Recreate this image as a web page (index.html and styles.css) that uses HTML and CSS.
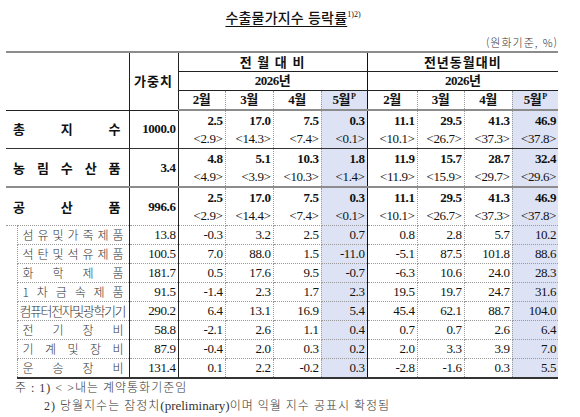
FILE: index.html
```html
<!DOCTYPE html>
<html lang="ko">
<head>
    <meta charset="UTF-8">
    <meta name="viewport" content="width=device-width, initial-scale=1.0">
    <title>수출물가지수 등락률</title>
    <link rel="stylesheet" href="styles.css">
</head>
<body>
    <div class="page">
        <h1 class="title"><span class="title-text">수출물가지수 등락률</span><sup>1)2)</sup></h1>
        <div class="unit">(원화기준, %)</div>

        <table class="price-table">
            <colgroup>
                <col class="c-pad">
                <col class="c-label">
                <col class="c-weight">
                <col class="c-m47"><col class="c-m48"><col class="c-m48"><col class="c-m46">
                <col class="c-m50"><col class="c-m47"><col class="c-m48"><col class="c-m46">
            </colgroup>
            <thead>
                <tr class="head-group">
                    <th colspan="2" rowspan="3" class="blank"></th>
                    <th rowspan="3" class="weight-head">가중치</th>
                    <th colspan="4" class="split">전 월 대 비</th>
                    <th colspan="4">전년동월대비</th>
                </tr>
                <tr class="head-year">
                    <th colspan="4" class="split">2026년</th>
                    <th colspan="4">2026년</th>
                </tr>
                <tr class="head-month">
                    <th>2월</th><th>3월</th><th>4월</th><th class="prelim split">5월<sup>P</sup></th>
                    <th>2월</th><th>3월</th><th>4월</th><th class="prelim">5월<sup>P</sup></th>
                </tr>
            </thead>
            <tbody>
                <tr class="main row-total">
                    <td colspan="2" class="label">총 지 수</td>
                    <td class="weight">1000.0</td>
                    <td><b>2.5</b><span>&lt;2.9&gt;</span></td>
                    <td><b>17.0</b><span>&lt;14.3&gt;</span></td>
                    <td><b>7.5</b><span>&lt;7.4&gt;</span></td>
                    <td class="prelim split"><b>0.3</b><span>&lt;0.1&gt;</span></td>
                    <td><b>11.1</b><span>&lt;10.1&gt;</span></td>
                    <td><b>29.5</b><span>&lt;26.7&gt;</span></td>
                    <td><b>41.3</b><span>&lt;37.3&gt;</span></td>
                    <td class="prelim"><b>46.9</b><span>&lt;37.8&gt;</span></td>
                </tr>
                <tr class="main row-agri">
                    <td colspan="2" class="label">농 림 수 산 품</td>
                    <td class="weight">3.4</td>
                    <td><b>4.8</b><span>&lt;4.9&gt;</span></td>
                    <td><b>5.1</b><span>&lt;3.9&gt;</span></td>
                    <td><b>10.3</b><span>&lt;10.3&gt;</span></td>
                    <td class="prelim split"><b>1.8</b><span>&lt;1.4&gt;</span></td>
                    <td><b>11.9</b><span>&lt;11.9&gt;</span></td>
                    <td><b>15.7</b><span>&lt;15.9&gt;</span></td>
                    <td><b>28.7</b><span>&lt;29.7&gt;</span></td>
                    <td class="prelim"><b>32.4</b><span>&lt;29.6&gt;</span></td>
                </tr>
                <tr class="main row-ind">
                    <td colspan="2" class="label">공 산 품</td>
                    <td class="weight">996.6</td>
                    <td><b>2.5</b><span>&lt;2.9&gt;</span></td>
                    <td><b>17.0</b><span>&lt;14.4&gt;</span></td>
                    <td><b>7.5</b><span>&lt;7.4&gt;</span></td>
                    <td class="prelim split"><b>0.3</b><span>&lt;0.1&gt;</span></td>
                    <td><b>11.1</b><span>&lt;10.1&gt;</span></td>
                    <td><b>29.5</b><span>&lt;26.7&gt;</span></td>
                    <td><b>41.3</b><span>&lt;37.3&gt;</span></td>
                    <td class="prelim"><b>46.9</b><span>&lt;37.8&gt;</span></td>
                </tr>
                <tr class="sub">
                    <td class="pad"></td><td class="label">섬 유 및 가 죽 제 품</td><td class="weight">13.8</td>
                    <td>-0.3</td><td>3.2</td><td>2.5</td><td class="prelim split">0.7</td>
                    <td>0.8</td><td>2.8</td><td>5.7</td><td class="prelim">10.2</td>
                </tr>
                <tr class="sub">
                    <td class="pad"></td><td class="label">석 탄 및 석 유 제 품</td><td class="weight">100.5</td>
                    <td>7.0</td><td>88.0</td><td>1.5</td><td class="prelim split">-11.0</td>
                    <td>-5.1</td><td>87.5</td><td>101.8</td><td class="prelim">88.6</td>
                </tr>
                <tr class="sub">
                    <td class="pad"></td><td class="label">화 학 제 품</td><td class="weight">181.7</td>
                    <td>0.5</td><td>17.6</td><td>9.5</td><td class="prelim split">-0.7</td>
                    <td>-6.3</td><td>10.6</td><td>24.0</td><td class="prelim">28.3</td>
                </tr>
                <tr class="sub">
                    <td class="pad"></td><td class="label">1 차 금 속 제 품</td><td class="weight">91.5</td>
                    <td>-1.4</td><td>2.3</td><td>1.7</td><td class="prelim split">2.3</td>
                    <td>19.5</td><td>19.7</td><td>24.7</td><td class="prelim">31.6</td>
                </tr>
                <tr class="sub">
                    <td class="pad"></td><td class="label tight">컴퓨터전자및광학기기</td><td class="weight">290.2</td>
                    <td>6.4</td><td>13.1</td><td>16.9</td><td class="prelim split">5.4</td>
                    <td>45.4</td><td>62.1</td><td>88.7</td><td class="prelim">104.0</td>
                </tr>
                <tr class="sub">
                    <td class="pad"></td><td class="label">전 기 장 비</td><td class="weight">58.8</td>
                    <td>-2.1</td><td>2.6</td><td>1.1</td><td class="prelim split">0.4</td>
                    <td>0.7</td><td>0.7</td><td>2.6</td><td class="prelim">6.4</td>
                </tr>
                <tr class="sub">
                    <td class="pad"></td><td class="label">기 계 및 장 비</td><td class="weight">87.9</td>
                    <td>-0.4</td><td>2.0</td><td>0.3</td><td class="prelim split">0.2</td>
                    <td>2.0</td><td>3.3</td><td>3.9</td><td class="prelim">7.0</td>
                </tr>
                <tr class="sub last">
                    <td class="pad"></td><td class="label">운 송 장 비</td><td class="weight">131.4</td>
                    <td>0.1</td><td>2.2</td><td>-0.2</td><td class="prelim split">0.3</td>
                    <td>-2.8</td><td>-1.6</td><td>0.3</td><td class="prelim">5.5</td>
                </tr>
            </tbody>
        </table>

        <div class="notes">
            <div class="note">주 : 1) &lt; &gt;내는 계약통화기준임</div>
            <div class="note second">2) 당월지수는 잠정치<span class="latin">(preliminary)</span>이며 익월 지수 공표시 확정됨</div>
        </div>
    </div>
</body>
</html>
```

FILE: styles.css
```css
body {
    margin: 0;
    background-color: #fff;
    color: #111;
    font-family: "Liberation Serif", "Noto Sans CJK KR", serif;
}
.page {
    width: 580px;
    padding-top: 6px;
}
.title {
    margin: 0;
    height: 22px;
    text-align: center;
    font-family: "Noto Sans CJK KR", sans-serif;
    font-size: 14px;
    font-weight: 500;
    line-height: 22px;
    padding-left: 6px;
}
.title-text {
    text-decoration: underline;
    text-underline-offset: 3px;
    letter-spacing: 0.2px;
}
.title sup {
    font-family: "Liberation Serif", serif;
    font-size: 8px;
    font-weight: normal;
    line-height: 0;
    vertical-align: 6px;
}
.unit {
    text-align: right;
    padding-right: 22px;
    margin-top: 6px;
    height: 17px;
    font-family: "Noto Sans CJK KR", sans-serif;
    font-size: 11px;
    font-weight: 300;
    line-height: 17px;
    letter-spacing: 1px;
    color: #333;
}

/* 표 */
.price-table {
    margin-left: 6px;
    width: 552px;
    border-collapse: collapse;
    table-layout: fixed;
    font-size: 13px;
}
.c-pad { width: 11px; }
.c-label { width: 112px; }
.c-weight { width: 49px; }
.c-m46 { width: 46px; }
.c-m47 { width: 47px; }
.c-m48 { width: 48px; }
.c-m50 { width: 50px; }

.price-table th,
.price-table td {
    padding: 0 2px 0 0;
    border-left: 1px dotted #9a9a9a;
    border-right: 1px dotted #9a9a9a;
}
.price-table th {
    height: 18px;
    font-weight: bold;
    font-size: 13px;
    line-height: 18px;
    text-align: center;
    padding: 0;
    border-bottom: 1px solid #222;
}
.price-table thead tr:first-child th {
    border-top: 2px solid #8c8c8c;
}
.price-table th.blank {
    border-left: none;
    border-right: 1px solid #222;
}
.price-table th.weight-head {
    border-right: 1px solid #222;
    font-family: "Noto Sans CJK KR", sans-serif;
}
.head-group th {
    font-family: "Noto Sans CJK KR", sans-serif;
    letter-spacing: 1px;
}
.head-group th:last-child,
.head-year th:last-child,
.head-month th:last-child {
    border-right: none;
}
.head-year th {
    letter-spacing: -0.5px;
}
.head-month th {
    letter-spacing: -0.5px;
    border-bottom: 2px solid #8c8c8c;
}
.head-month sup {
    font-size: 8px;
    line-height: 0;
    vertical-align: 5px;
    margin-left: 1px;
}
.price-table .split {
    border-right: 1px solid #111;
}
.price-table .prelim {
    background-color: #dde3f4;
}

/* 본문 */
.price-table td {
    text-align: right;
    letter-spacing: -0.4px;
    white-space: nowrap;
}
.price-table td.label {
    text-align: justify;
    text-align-last: justify;
    border-left: none;
    border-right: 1px solid #222;
    padding: 0 8px 0 7px;
    font-family: "Noto Sans CJK KR", sans-serif;
    letter-spacing: 0;
    white-space: normal;
}
.price-table td.weight {
    border-right: 1px solid #222;
}
.price-table td:last-child {
    border-right: none;
}
.main td {
    height: 37px;
    line-height: 18px;
    border-bottom: 1px solid #333;
}
.main b,
.main span {
    display: block;
}
.main span {
    font-weight: normal;
}
.main .label,
.main .weight {
    font-weight: bold;
}
.row-agri td {
    border-bottom: 2px solid #8c8c8c;
}
.row-ind td {
    border-bottom: 1px dotted #9a9a9a;
}

.sub td {
    height: 18px;
    line-height: 18px;
    border-bottom: 1px dotted #9a9a9a;
}
.sub td.pad {
    border-left: none;
    border-right: 1px dotted #9a9a9a;
    border-bottom: none;
}
.price-table .sub td.label {
    padding: 0 5px 0 5px;
    font-size: 12px;
    font-weight: 300;
    color: #333;
}
.price-table .sub td.tight {
    text-align: left;
    text-align-last: left;
    letter-spacing: -1.4px;
    padding: 0 0 0 2px;
    font-size: 13px;
    white-space: nowrap;
}
.sub.last td {
    border-bottom: 2px solid #333;
}
.sub.last td.pad {
    border-bottom: none;
}

/* 주석 */
.notes {
    margin-top: 0;
    font-family: "Liberation Serif", "Noto Sans CJK KR", serif;
    font-size: 12px;
    font-weight: 300;
    line-height: 18px;
    letter-spacing: 1px;
    color: #333;
}
.note {
    padding-left: 15px;
}
.note.second {
    padding-left: 44px;
}
.notes .latin {
    letter-spacing: 0;
    font-size: 13px;
}
```
